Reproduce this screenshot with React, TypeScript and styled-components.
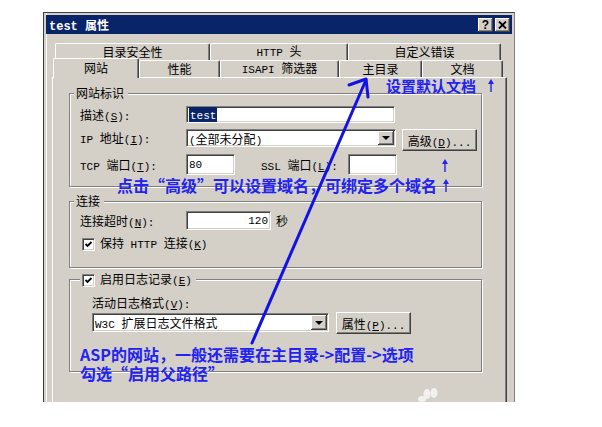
import { FC, Fragment } from 'react';
import styled, { createGlobalStyle } from 'styled-components';

const GlobalStyle = createGlobalStyle`
  html, body {
    margin: 0;
    padding: 0;
    background: #fff;
  }
  body {
    font-family: 'Noto Sans CJK SC', sans-serif;
    font-size: 12px;
    color: #000;
  }
`;

const Page = styled.div`
  position: relative;
  width: 602px;
  height: 427px;
  box-sizing: border-box;
  padding: 12px 0 0 43px;
  overflow: hidden;
  background: #fff;
`;

const Window = styled.div`
  width: 472px;
  height: 390px;
  box-sizing: border-box;
  display: flex;
  flex-direction: column;
  background: #d4d0c8;
  border: 1px solid #404040;
  border-right-color: #808080;
  border-bottom: none;
  box-shadow: inset 2px 0 0 #d4d0c8, inset 3px 0 0 #fff;
  overflow: hidden;
`;

const TitleBar = styled.div`
  margin: 2px 2px 0;
  height: 19px;
  flex-shrink: 0;
  display: flex;
  align-items: center;
  padding: 0 2px 0 3px;
  background: #0a246a;
`;

const TitleText = styled.span`
  flex: 1;
  color: #fff;
  font-family: 'Liberation Mono', 'Noto Sans CJK SC', monospace;
  font-weight: bold;
  font-size: 12px;
  white-space: nowrap;
`;

const CaptionButton = styled.div`
  width: 15px;
  height: 14px;
  margin-left: 2px;
  box-sizing: border-box;
  display: flex;
  align-items: center;
  justify-content: center;
  background: #d4d0c8;
  box-shadow: inset -1px -1px 0 #404040, inset 1px 1px 0 #fff, inset -2px -2px 0 #808080;
  font: bold 12px/14px 'Liberation Sans', sans-serif;
`;

// ASCII runs are drawn in a fixed-width face, like the dialog's system font
const Latin = styled.span`
  font-family: 'Liberation Mono', monospace;
  font-size: 11px;
`;

const TabStrip = styled.div`
  margin: 9px 0 0 8px;
  width: 455px;
  flex-shrink: 0;
`;

const TabRow = styled.div<{ $pad: number }>`
  display: flex;
  height: 17px;
  padding-left: ${(p) => p.$pad}px;
`;

const Tab = styled.div<{ $w: number; $active?: boolean }>`
  position: relative;
  z-index: ${(p) => (p.$active ? 2 : 0)};
  width: ${(p) => p.$w}px;
  height: ${(p) => (p.$active ? 20 : 17)}px;
  margin-top: ${(p) => (p.$active ? -2 : 0)}px;
  box-sizing: border-box;
  display: flex;
  align-items: center;
  justify-content: center;
  padding-bottom: ${(p) => (p.$active ? 2 : 0)}px;
  line-height: 14px;
  background: #d4d0c8;
  border-top: 1px solid #fff;
  border-left: 1px solid #fff;
  border-right: 1px solid #404040;
  border-radius: 2px 2px 0 0;
  box-shadow: inset -1px 0 0 #808080;
  white-space: nowrap;
`;

const Panel = styled.div`
  flex: 1;
  margin-left: 8px;
  width: 455px;
  box-sizing: border-box;
  padding-left: 16px;
  background: #d4d0c8;
  border-top: 1px solid #fff;
  border-left: 1px solid #fff;
  border-right: 1px solid #404040;
  box-shadow: inset -1px 0 0 #808080;
`;

const Group = styled.fieldset<{ $mt: number; $pb: number }>`
  margin: ${(p) => p.$mt}px 0 0;
  width: 413px;
  min-width: 0;
  box-sizing: border-box;
  padding: 0 0 ${(p) => p.$pb}px;
  border: 1px solid #808080;
  box-shadow: inset 1px 1px 0 #fff, 1px 1px 0 #fff;
`;

const Legend = styled.legend<{ $ml: number }>`
  margin-left: ${(p) => p.$ml}px;
  padding: 0 4px 0 2px;
  height: 14px;
  line-height: 14px;
  background: #d4d0c8;
`;

const LegendCheck = styled.span`
  display: inline-flex;
  align-items: center;
  gap: 5px;
`;

const Row = styled.div<{ $mt: number; $h: number; $indent: number }>`
  display: flex;
  align-items: flex-start;
  margin-top: ${(p) => p.$mt}px;
  height: ${(p) => p.$h}px;
  padding-left: ${(p) => p.$indent}px;
  white-space: nowrap;
`;

const Label = styled.span<{ $w?: number; $lh: number; $ml?: number }>`
  display: block;
  flex-shrink: 0;
  width: ${(p) => (p.$w ? `${p.$w}px` : 'auto')};
  margin-left: ${(p) => p.$ml ?? 0}px;
  line-height: ${(p) => p.$lh}px;
`;

const Field = styled.div<{ $w: number; $h: number; $right?: boolean; $mt?: number }>`
  width: ${(p) => p.$w}px;
  height: ${(p) => p.$h}px;
  margin-top: ${(p) => p.$mt ?? 0}px;
  box-sizing: border-box;
  flex-shrink: 0;
  display: flex;
  align-items: center;
  justify-content: ${(p) => (p.$right ? 'flex-end' : 'flex-start')};
  padding: ${(p) => (p.$right ? '0 2px 0 0' : '0 0 0 2px')};
  background: #fff;
  border: 1px solid;
  border-color: #808080 #fff #fff #808080;
  box-shadow: inset 1px 1px 0 #404040, inset -1px -1px 0 #d4d0c8;
  overflow: hidden;
  white-space: nowrap;
`;

const Selected = styled.span`
  background: #0a246a;
  color: #fff;
  line-height: 13px;
  padding: 0 1px;
`;

const DropButton = styled.span`
  align-self: stretch;
  width: 16px;
  margin: 1px 1px 1px auto;
  box-sizing: border-box;
  display: flex;
  align-items: center;
  justify-content: center;
  background: #d4d0c8;
  box-shadow: inset -1px -1px 0 #404040, inset 1px 1px 0 #fff, inset -2px -2px 0 #808080;

  &::after {
    content: '';
    border-left: 4px solid transparent;
    border-right: 4px solid transparent;
    border-top: 4px solid #000;
  }
`;

const PushButton = styled.div<{ $w: number; $h: number; $ml: number }>`
  width: ${(p) => p.$w}px;
  height: ${(p) => p.$h}px;
  margin-left: ${(p) => p.$ml}px;
  box-sizing: border-box;
  flex-shrink: 0;
  display: flex;
  align-items: center;
  justify-content: center;
  background: #d4d0c8;
  border: 1px solid;
  border-color: #fff #404040 #404040 #fff;
  box-shadow: inset -1px -1px 0 #808080;
  white-space: nowrap;
`;

const CheckBox = styled.span`
  width: 13px;
  height: 13px;
  box-sizing: border-box;
  flex-shrink: 0;
  display: inline-flex;
  background: #fff;
  border: 1px solid;
  border-color: #808080 #fff #fff #808080;
  box-shadow: inset 1px 1px 0 #404040, inset -1px -1px 0 #d4d0c8;
`;

const CheckRow = styled.span`
  display: flex;
  align-items: center;
  gap: 5px;
  line-height: 13px;
`;

const Overlay = styled.svg`
  position: absolute;
  left: 0;
  top: 0;
  pointer-events: none;
`;

const Note = styled.div<{ $x: number; $y: number; $size: number }>`
  position: absolute;
  left: ${(p) => p.$x}px;
  top: ${(p) => p.$y}px;
  display: flex;
  align-items: center;
  font-family: 'Noto Sans CJK SC', sans-serif;
  font-weight: bold;
  font-size: ${(p) => p.$size}px;
  line-height: ${(p) => p.$size}px;
  color: #2323f0;
  white-space: nowrap;
`;

const Arrow = styled.svg<{ $ml?: number }>`
  margin-left: ${(p) => p.$ml ?? 0}px;
  flex-shrink: 0;
`;

// "描述(&S):" -> mixed CJK / fixed-width text with the mnemonic letter underlined
const Caption: FC<{ text: string }> = ({ text }) => {
  const runs = text.split(/([\x20-\x7e]+)/).filter(Boolean);
  return (
    <span>
      {runs.map((run, i) => {
        if (!/^[\x20-\x7e]+$/.test(run)) return <Fragment key={i}>{run}</Fragment>;
        const [before, after] = run.split('&');
        return (
          <Latin key={i}>
            {before}
            {after !== undefined && (
              <>
                <u>{after.charAt(0)}</u>
                {after.slice(1)}
              </>
            )}
          </Latin>
        );
      })}
    </span>
  );
};

const Check = () => (
  <CheckBox>
    <svg width="11" height="11" viewBox="0 0 11 11">
      <polyline points="2.5,5 4.5,7 8.5,3" fill="none" stroke="#000" strokeWidth="1.8" />
    </svg>
  </CheckBox>
);

const UpArrow: FC<{ ml?: number; h?: number }> = ({ ml, h = 13 }) => (
  <Arrow $ml={ml} width="6" height={h} viewBox={`0 0 6 ${h}`}>
    <path d={`M3 4 V${h}`} stroke="#2323f0" strokeWidth="1.4" />
    <path d="M0 5 L3 0 L6 5 Z" fill="#2323f0" />
  </Arrow>
);

const backTabs: [string, number][] = [
  ['目录安全性', 155],
  ['HTTP 头', 138],
  ['自定义错误', 153],
];

const frontTabs: [string, number][] = [
  ['网站', 86],
  ['性能', 81],
  ['ISAPI 筛选器', 119],
  ['主目录', 83],
  ['文档', 81],
];

const App: FC = () => {
  return (
    <Page>
      <GlobalStyle />
      <Window>
        <TitleBar>
          <TitleText>test 属性</TitleText>
          <CaptionButton>?</CaptionButton>
          <CaptionButton>
            <svg width="9" height="8" viewBox="0 0 9 8">
              <path d="M1 0.5 L8 7.5 M8 0.5 L1 7.5" stroke="#000" strokeWidth="1.8" />
            </svg>
          </CaptionButton>
        </TitleBar>

        <TabStrip>
          <TabRow $pad={3}>
            {backTabs.map(([name, w]) => (
              <Tab key={name} $w={w}>
                <Caption text={name} />
              </Tab>
            ))}
          </TabRow>
          <TabRow $pad={1}>
            {frontTabs.map(([name, w], i) => (
              <Tab key={name} $w={w} $active={i === 0}>
                <Caption text={name} />
              </Tab>
            ))}
          </TabRow>
        </TabStrip>

        <Panel>
          <Group $mt={8} $pb={11}>
            <Legend $ml={4}>网站标识</Legend>
            <Row $mt={6} $h={17} $indent={10}>
              <Label $w={106} $lh={17}>
                <Caption text="描述(&S):" />
              </Label>
              <Field $w={209} $h={17}>
                <Selected>
                  <Latin>test</Latin>
                </Selected>
              </Field>
            </Row>
            <Row $mt={6} $h={22} $indent={10}>
              <Label $w={106} $lh={18}>
                <Caption text="IP 地址(&I):" />
              </Label>
              <Field $w={210} $h={18}>
                <Caption text="(全部未分配)" />
                <DropButton />
              </Field>
              <PushButton $w={75} $h={22} $ml={6}>
                <Caption text="高级(&D)..." />
              </PushButton>
            </Row>
            <Row $mt={3} $h={21} $indent={10}>
              <Label $w={106} $lh={21}>
                <Caption text="TCP 端口(&T):" />
              </Label>
              <Field $w={49} $h={21}>
                <Latin>80</Latin>
              </Field>
              <Label $w={87} $lh={21} $ml={26}>
                <Caption text="SSL 端口(&L):" />
              </Label>
              <Field $w={49} $h={21} />
            </Row>
          </Group>

          <Group $mt={7} $pb={18}>
            <Legend $ml={4}>连接</Legend>
            <Row $mt={3} $h={19} $indent={10}>
              <Label $w={106} $lh={19}>
                <Caption text="连接超时(&N):" />
              </Label>
              <Field $w={85} $h={19} $right>
                <Latin>120</Latin>
              </Field>
              <Label $lh={19} $ml={5}>
                秒
              </Label>
            </Row>
            <Row $mt={6} $h={13} $indent={12}>
              <CheckRow>
                <Check />
                <Caption text="保持 HTTP 连接(&K)" />
              </CheckRow>
            </Row>
          </Group>

          <Group $mt={4} $pb={37}>
            <Legend $ml={10}>
              <LegendCheck>
                <Check />
                <Caption text="启用日志记录(&E)" />
              </LegendCheck>
            </Legend>
            <Row $mt={10} $h={14} $indent={22}>
              <Label $lh={14}>
                <Caption text="活动日志格式(&V):" />
              </Label>
            </Row>
            <Row $mt={2} $h={22} $indent={22}>
              <Field $w={237} $h={19} $mt={1}>
                <Caption text="W3C 扩展日志文件格式" />
                <DropButton />
              </Field>
              <PushButton $w={75} $h={22} $ml={7}>
                <Caption text="属性(&P)..." />
              </PushButton>
            </Row>
          </Group>
        </Panel>
      </Window>

      {/* pen stroke from the tip note up to the main-directory tab */}
      <Overlay width="602" height="427" viewBox="0 0 602 427">
        <path d="M252 343 L366 80" stroke="#1212e6" strokeWidth="3" strokeLinecap="round" fill="none" />
        <polyline
          points="349,85 366,79 368,97"
          stroke="#1212e6"
          strokeWidth="3"
          strokeLinecap="round"
          strokeLinejoin="round"
          fill="none"
        />
        <g fill="#f2f1ee">
          <ellipse cx="422" cy="399" rx="4" ry="3" />
          <ellipse cx="427" cy="394" rx="3.5" ry="5" />
          <ellipse cx="434" cy="393" rx="3.5" ry="5" />
        </g>
      </Overlay>

      <Note $x={386} $y={78} $size={15}>
        设置默认文档
        <UpArrow ml={12} h={13} />
      </Note>
      <Note $x={442} $y={159} $size={13}>
        <UpArrow h={13} />
      </Note>
      <Note $x={117} $y={177} $size={16}>
        点击“高级”可以设置域名，可绑定多个域名
        <UpArrow ml={6} h={13} />
      </Note>
      <Note $x={80} $y={346} $size={16}>
        ASP的网站，一般还需要在主目录-&gt;配置-&gt;选项
      </Note>
      <Note $x={80} $y={365} $size={16}>
        勾选“启用父路径”
      </Note>
    </Page>
  );
};

export default App;
